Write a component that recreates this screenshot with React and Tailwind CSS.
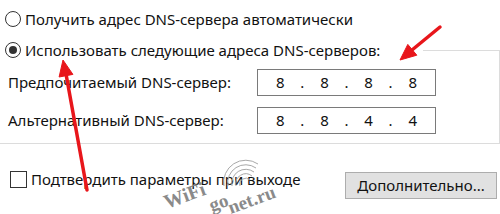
import React from 'react';

function Radio({ checked }) {
    return (
        <span className="flex h-[16px] w-[16px] shrink-0 items-center justify-center rounded-full border border-[#333333] bg-white">
            {checked && <span className="h-[8px] w-[8px] rounded-full bg-[#333333]" />}
        </span>
    );
}

function IpBox({ parts }) {
    return (
        <div className="flex h-[27px] w-[179px] items-center justify-between border border-[#7a7a7a] bg-white px-[18px] text-[15px]">
            {parts.map((p, i) => (
                <React.Fragment key={i}>
                    {i > 0 && <span>.</span>}
                    <span>{p}</span>
                </React.Fragment>
            ))}
        </div>
    );
}

function Arrows() {
    return (
        <svg className="pointer-events-none absolute inset-0" width="500" height="214" viewBox="0 0 500 214">
            <g fill="#e8161b" stroke="#e8161b">
                <line x1="87" y1="190" x2="66" y2="74" strokeWidth="3.5" strokeLinecap="round" />
                <polygon points="63,60 72.9,74.4 59.1,77" strokeWidth="1" />
                <line x1="440" y1="27" x2="412" y2="50" strokeWidth="3.5" strokeLinecap="round" />
                <polygon points="400,60 416.8,55.2 407.8,44.4" strokeWidth="1" />
            </g>
        </svg>
    );
}

function Watermark() {
    return (
        <div className="pointer-events-none absolute inset-0 font-['Liberation_Serif',serif] font-bold text-[#8a8a8a]">
            <svg className="absolute left-[218px] top-[156px]" width="44" height="34" viewBox="0 0 44 34">
                <g fill="none" stroke="#a8a8a8" strokeWidth="1">
                    <path d="M6 30 A22 22 0 0 1 40 8" />
                    <path d="M10 30 A18 18 0 0 1 38 12" />
                    <path d="M14 30 A14 14 0 0 1 36 16" />
                    <path d="M18 30 A10 10 0 0 1 34 20" />
                    <path d="M22 30 A6 6 0 0 1 32 24" />
                </g>
            </svg>
            <span className="absolute left-[163px] top-[185px] rotate-[-20deg] text-[20px] leading-none">WiFi</span>
            <span className="absolute left-[209px] top-[193px] rotate-[-20deg] text-[19px] leading-none">go</span>
            <span className="absolute left-[227px] top-[190px] rotate-[-20deg] text-[19px] leading-none">net.ru</span>
        </div>
    );
}

export default function App() {
    return (
        <div className="relative h-[214px] w-[500px] overflow-hidden bg-white font-['Noto_Sans',sans-serif] text-[15px] text-[#111111]">
            <div className="flex flex-col">
                <label className="mt-[9px] flex h-[20px] items-center gap-[4px] pl-[5px]">
                    <Radio />
                    <span>Получить адрес DNS-сервера автоматически</span>
                </label>
                <fieldset className="mt-[11px] border-t border-r border-b border-[#dcdcdc]">
                    <legend className="w-[423px] bg-white">
                        <span className="flex h-[20px] items-center gap-[4px] pl-[5px]">
                            <Radio checked />
                            <span>Использовать следующие адреса DNS-серверов:</span>
                        </span>
                    </legend>
                    <div className="grid grid-cols-[249px_179px] gap-y-[11px] pt-[9px] pb-[9px] pl-[8px]">
                        <div className="flex items-center">Предпочитаемый DNS-сервер:</div>
                        <IpBox parts={['8', '8', '8', '8']} />
                        <div className="flex items-center">Альтернативный DNS-сервер:</div>
                        <IpBox parts={['8', '8', '4', '4']} />
                    </div>
                </fieldset>
                <div className="flex items-start justify-between">
                    <label className="mt-[25px] flex h-[20px] items-center gap-[4px] pl-[10px]">
                        <span className="h-[17px] w-[17px] shrink-0 border border-[#333333] bg-white" />
                        <span>Подтвердить параметры при выходе</span>
                    </label>
                    <button className="mt-[28px] mr-[3px] flex h-[27px] w-[152px] items-center justify-center border border-[#adadad] bg-[#e1e1e1]">
                        Дополнительно...
                    </button>
                </div>
            </div>
            <Watermark />
            <Arrows />
        </div>
    );
}
